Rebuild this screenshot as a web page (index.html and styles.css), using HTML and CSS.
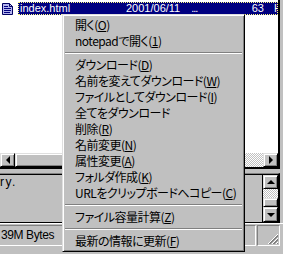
FILE: index.html
```html
<!DOCTYPE html>
<html lang="ja">
<head>
    <meta charset="UTF-8">
    <title>ファイル一覧</title>
    <link rel="stylesheet" href="styles.css">
</head>
<body>
    <div class="window">
        <div class="pane-row">
            <div class="pane top-pane">
                <div class="list">
                    <div class="row">
                        <span class="file-icon">
                            <svg width="11" height="12" viewBox="0 0 11 12">
                                <path d="M0.5 0.5h7l3 3v8h-10z" fill="#b4b4ec" stroke="#000060"/>
                                <path d="M7.5 0.5v3h3" fill="none" stroke="#000060"/>
                                <path d="M2 3.5h4M2 5.5h7M2 7.5h7M2 9.5h6" stroke="#000080"/>
                            </svg>
                        </span>
                        <div class="cells selected">
                            <span class="cell name">index.html</span>
                            <span class="cell date">2001/06/11<span class="more">...</span></span>
                            <span class="cell size">63</span>
                            <span class="cell type">HTML</span>
                        </div>
                    </div>
                </div>
                <div class="hscroll">
                    <div class="sbtn"><span class="arrow left"></span></div>
                    <div class="sthumb hthumb"></div>
                    <div class="track"></div>
                    <div class="sbtn"><span class="arrow right"></span></div>
                </div>
            </div>
        </div>

        <div class="pane-row lower-row">
            <div class="pane lower-pane">
                <div class="lower-body">
                    <div class="message">ry.</div>
                    <div class="vscroll">
                        <div class="sbtn vbtn"><span class="arrow up"></span></div>
                        <div class="track vtrack"></div>
                        <div class="sthumb vthumb"></div>
                        <div class="sbtn vbtn down-btn"><span class="arrow down"></span></div>
                    </div>
                </div>
            </div>
        </div>

        <div class="statusbar">
            <div class="panel main-panel">39M Bytes</div>
            <div class="panel mid-panel"></div>
            <div class="panel grip-panel">
                <svg class="grip" width="12" height="12" viewBox="0 0 12 12">
                    <path d="M11 1L1 11M11 5L5 11M11 9L9 11" stroke="#fff"/>
                    <path d="M11 2L2 11M11 3L3 11M11 6L6 11M11 7L7 11M11 10L10 11" stroke="#808080"/>
                </svg>
            </div>
        </div>
    </div>

    <div class="menu">
        <div class="item">開く(<u>O</u>)</div>
        <div class="item">notepadで開く(<u>1</u>)</div>
        <div class="sep"></div>
        <div class="item">ダウンロード(<u>D</u>)</div>
        <div class="item">名前を変えてダウンロード(<u>W</u>)</div>
        <div class="item">ファイルとしてダウンロード(<u>I</u>)</div>
        <div class="item">全てをダウンロード</div>
        <div class="item">削除(<u>R</u>)</div>
        <div class="item">名前変更(<u>N</u>)</div>
        <div class="item">属性変更(<u>A</u>)</div>
        <div class="item">フォルダ作成(<u>K</u>)</div>
        <div class="item">URLをクリップボードへコピー(<u>C</u>)</div>
        <div class="sep"></div>
        <div class="item">ファイル容量計算(<u>Z</u>)</div>
        <div class="sep"></div>
        <div class="item">最新の情報に更新(<u>F</u>)</div>
    </div>
</body>
</html>
```

FILE: styles.css
```css
body {
    margin: 0;
    width: 283px;
    height: 254px;
    overflow: hidden;
    background: #c0c0c0;
    font-family: "Liberation Sans", "Noto Sans CJK JP", sans-serif;
    color: #000;
    position: relative;
}

.window {
    display: flex;
    flex-direction: column;
    height: 254px;
}

.pane-row {
    display: flex;
    padding-right: 3px;
}

.pane {
    width: 278px;
    border-right: 2px solid #000;
}

.top-pane {
    border-bottom: 2px solid #000;
}

/* file list */
.list {
    height: 153px;
    background: #fff;
    padding-top: 2px;
    box-sizing: border-box;
}

.row {
    display: flex;
    height: 13px;
}

.file-icon {
    width: 18px;
    display: flex;
    padding-left: 2px;
    padding-top: 1px;
    box-sizing: border-box;
}

.cells {
    flex: 1;
    display: grid;
    grid-template-columns: 106px 82px 56px 1fr;
    padding-left: 2px;
    font-size: 11px;
    line-height: 13px;
    white-space: nowrap;
    overflow: hidden;
}

.selected {
    background: #000080;
    color: #fff;
    outline: 1px dotted #ffff80;
    outline-offset: -1px;
}

.cell {
    overflow: hidden;
}

.more {
    margin-left: 11px;
    letter-spacing: -1px;
}

.size {
    text-align: right;
}

.type {
    padding-left: 10px;
}

/* scrollbars */
.hscroll {
    display: flex;
    height: 14px;
}

.sbtn,
.sthumb {
    box-sizing: border-box;
    background: #c0c0c0;
    border: 1px solid;
    border-color: #dfdfdf #000 #000 #dfdfdf;
    box-shadow: inset 1px 1px #fff, inset -1px -1px #808080;
}

.sbtn {
    width: 15px;
    display: flex;
    align-items: center;
    justify-content: center;
}

.hthumb {
    width: 185px;
}

.track {
    flex: 1;
    background: repeating-conic-gradient(#fff 0 25%, #c0c0c0 0 50%) 0 0 / 2px 2px;
}

.arrow {
    width: 0;
    height: 0;
    border: 4px solid transparent;
}

.arrow.left {
    border-left: 0;
    border-right-color: #000;
}

.arrow.right {
    border-right: 0;
    border-left-color: #000;
}

.arrow.up {
    border-top: 0;
    border-bottom-color: #000;
}

.arrow.down {
    border-bottom: 0;
    border-top-color: #000;
}

/* lower pane */
.lower-row {
    margin-top: 4px;
}

.lower-pane {
    border-top: 1px solid #808080;
    border-bottom: 1px solid #000;
}

.lower-body {
    display: flex;
    height: 47px;
    border-top: 1px solid #000;
}

.message {
    flex: 1;
    border-right: 1px solid #000;
    font-size: 12px;
    line-height: 10px;
    padding-top: 2px;
    letter-spacing: 1.5px;
}

.vscroll {
    width: 15px;
    display: flex;
    flex-direction: column;
}

.vbtn {
    width: 15px;
    height: 14px;
}

.down-btn {
    height: 15px;
}

.vthumb {
    height: 9px;
}

/* status bar */
.statusbar {
    display: flex;
    gap: 2px;
    border-top: 1px solid #fff;
    padding: 1px 3px 0 0;
}

.panel {
    height: 21px;
    box-sizing: border-box;
    border: 1px solid;
    border-color: #808080 #fff #fff #808080;
}

.main-panel {
    width: 200px;
    border-left: 0;
    font-size: 12px;
    letter-spacing: -0.4px;
    line-height: 19px;
    padding-left: 1px;
}

.mid-panel {
    width: 54px;
}

.grip-panel {
    width: 23px;
    margin-left: -1px;
    display: flex;
    align-items: flex-end;
    justify-content: flex-end;
}

/* context menu */
.menu {
    position: absolute;
    left: 62px;
    top: 14px;
    width: 183px;
    box-sizing: border-box;
    padding: 2px 1px;
    background: #c0c0c0;
    border: 1px solid;
    border-color: #dfdfdf #000 #000 #dfdfdf;
    box-shadow: inset 1px 1px #fff, inset -1px -1px #808080;
    font-family: "Noto Sans CJK JP", sans-serif;
    font-size: 12px;
    font-feature-settings: "palt";
    letter-spacing: -0.5px;
}

.item {
    height: 16px;
    line-height: 16px;
    padding-left: 11px;
    white-space: nowrap;
}

.item u {
    text-underline-offset: 1px;
}

.sep {
    height: 0;
    margin: 3px 1px;
    border-top: 1px solid #808080;
    border-bottom: 1px solid #fff;
}
```
